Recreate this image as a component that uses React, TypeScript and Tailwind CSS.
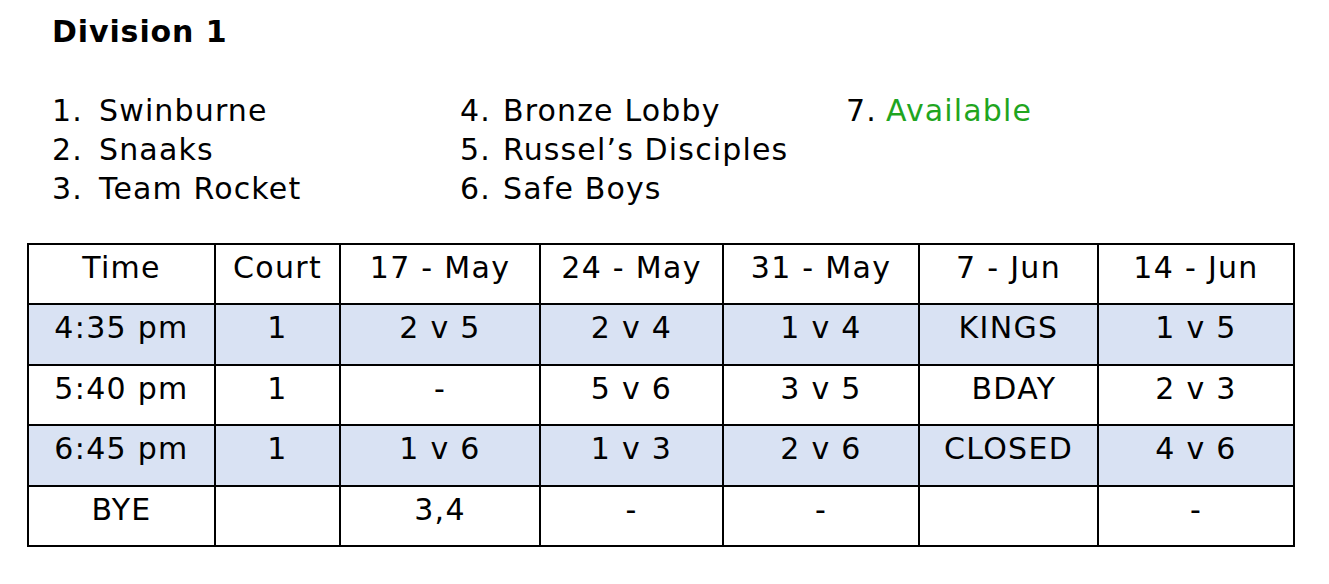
const TEAMS: [string, string, boolean?][][] = [
  [
    ['1.', 'Swinburne'],
    ['2.', 'Snaaks'],
    ['3.', 'Team Rocket'],
  ],
  [
    ['4.', 'Bronze Lobby'],
    ['5.', 'Russel’s Disciples'],
    ['6.', 'Safe Boys'],
  ],
  [['7.', 'Available', true]],
];

const COLS = [187, 125, 200, 183, 196, 179, 196];
const HEAD = ['Time', 'Court', '17 - May', '24 - May', '31 - May', '7 - Jun', '14 - Jun'];
const ROWS: { cells: string[]; shaded: boolean }[] = [
  { cells: ['4:35 pm', '1', '2 v 5', '2 v 4', '1 v 4', 'KINGS', '1 v 5'], shaded: true },
  { cells: ['5:40 pm', '1', '-', '5 v 6', '3 v 5', '\u00a0BDAY', '2 v 3'], shaded: false },
  { cells: ['6:45 pm', '1', '1 v 6', '1 v 3', '2 v 6', 'CLOSED', '4 v 6'], shaded: true },
  { cells: ['BYE', '', '3,4', '-', '-', '', '-'], shaded: false },
];

export default function App() {
  return (
    <div
      className="min-h-screen bg-white text-black pl-[52px] pt-[14px]"
      style={{ fontFamily: '"DejaVu Sans", Verdana, sans-serif' }}
    >
      <h1 className="text-[30px] leading-[36px] font-bold tracking-[0.9px]">Division 1</h1>

      <div className="mt-[41px] flex text-[30px] leading-[39px] tracking-[1.15px]">
        {TEAMS.map((col, i) => (
          <ul key={i} className={i === 0 ? 'w-[408px]' : i === 1 ? 'w-[386px]' : ''}>
            {col.map(([num, name, avail]) => (
              <li key={num} className="flex">
                <span className={i === 2 ? 'w-[40px]' : i === 1 ? 'w-[43px]' : 'w-[47px]'}>{num}</span>
                <span className={avail ? 'text-[#1fa51f]' : ''}>{name}</span>
              </li>
            ))}
          </ul>
        ))}
      </div>

      <table className="mt-[35px] -ml-[25px] table-fixed border-collapse text-[30px] leading-[36px] tracking-[1.3px]">
        <colgroup>
          {COLS.map((w, i) => (
            <col key={i} style={{ width: w }} />
          ))}
        </colgroup>
        <thead>
          <tr className="h-[60px]">
            {HEAD.map((h) => (
              <th key={h} className="border-2 border-black font-normal text-center align-top pt-[5px]">
                {h}
              </th>
            ))}
          </tr>
        </thead>
        <tbody>
          {ROWS.map((r, ri) => (
            <tr key={ri} className={r.shaded ? 'h-[61px] bg-[#d9e2f3]' : 'h-[60px]'}>
              {r.cells.map((c, ci) => (
                <td key={ci} className="border-2 border-black text-center align-top pt-[5px] whitespace-pre">
                  {c}
                </td>
              ))}
            </tr>
          ))}
        </tbody>
      </table>
    </div>
  );
}
